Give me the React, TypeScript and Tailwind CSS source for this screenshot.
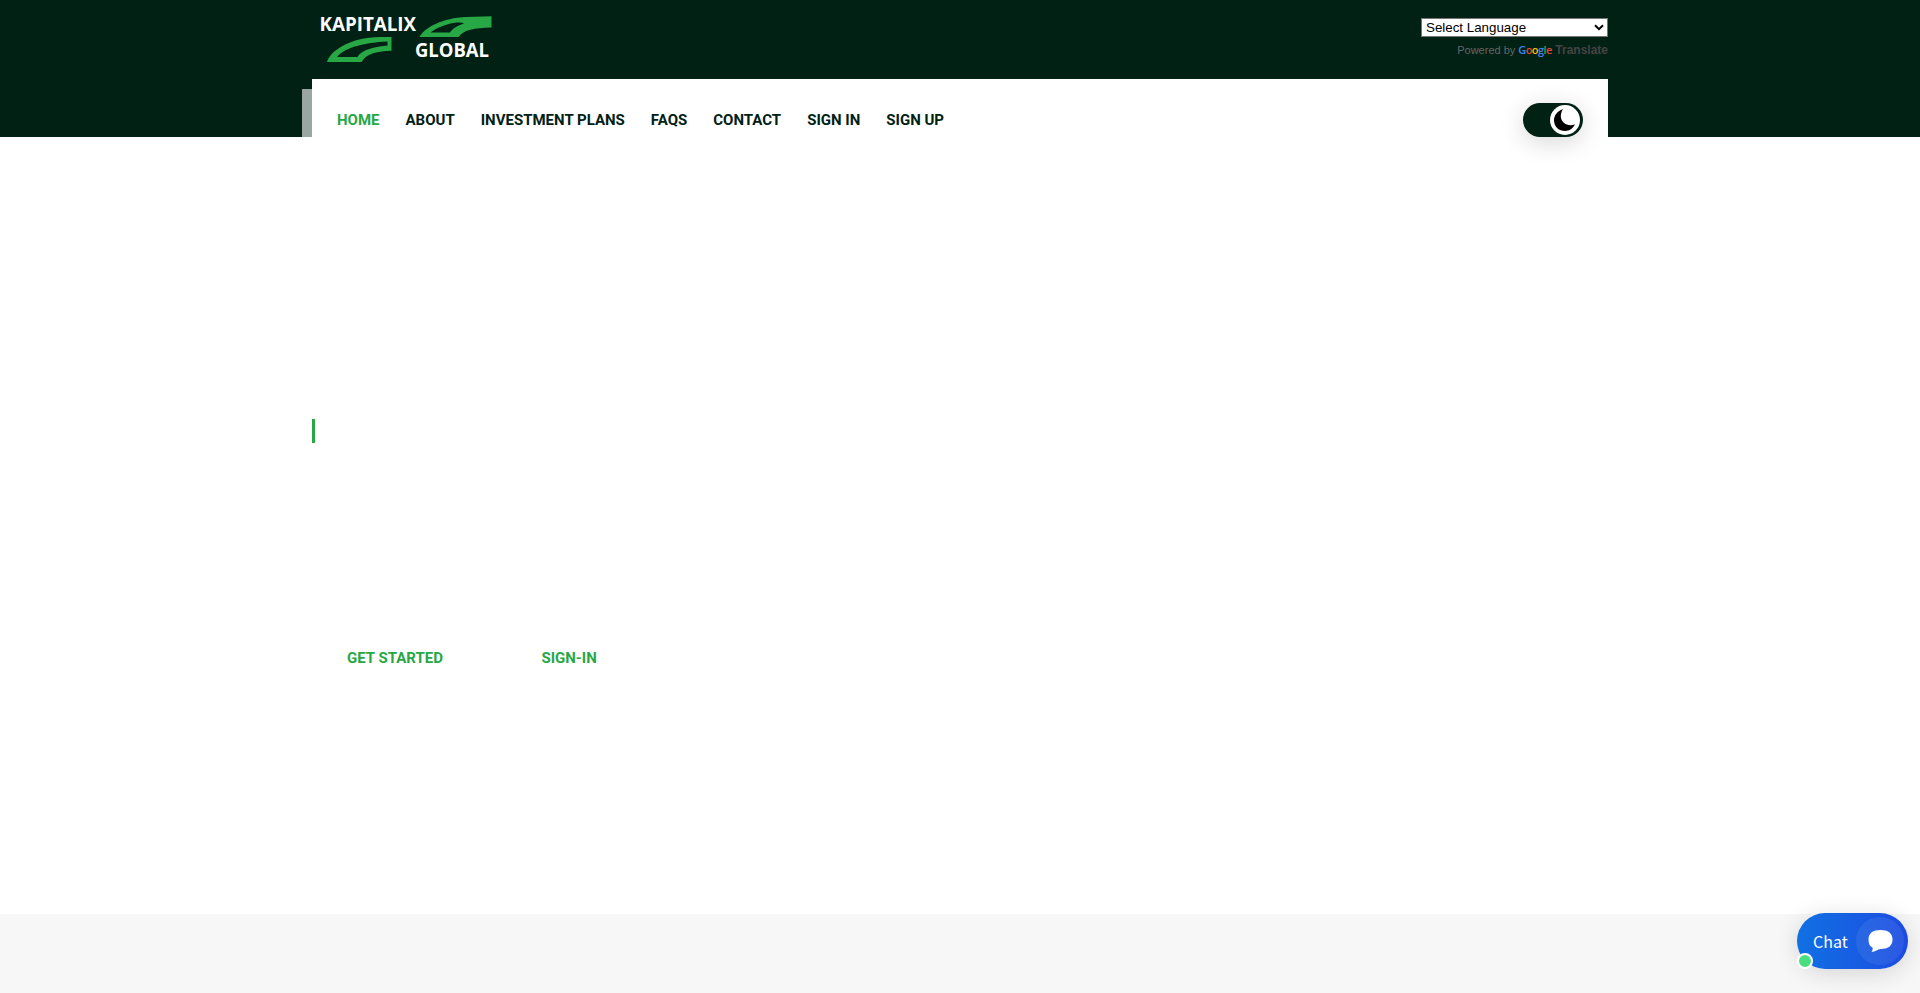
const links: { label: string; active?: boolean }[] = [
  { label: "HOME", active: true },
  { label: "ABOUT" },
  { label: "INVESTMENT PLANS" },
  { label: "FAQS" },
  { label: "CONTACT" },
  { label: "SIGN IN" },
  { label: "SIGN UP" },
];

function Logo() {
  return (
    <svg className="h-[60px] w-[180px]" viewBox="312 8 180 60" role="img" aria-label="Kapitalix Global">
      <g fill="#fff" className="font-['Open_Sans',sans-serif] text-[19.5px] font-bold">
        <text x="319.500" y="31" textLength="96.500" lengthAdjust="spacingAndGlyphs">KAPITALIX</text>
        <text x="415" y="57" textLength="74" lengthAdjust="spacingAndGlyphs">GLOBAL</text>
      </g>
      <g fill="#28a745" fillRule="evenodd">
        <path d="M419.500 37C425 27 443 18 466 17L491.500 16.300V27.500C474 28 464 29.500 458.500 37ZM430.500 32.500H450C453 28.500 456 26 464 23.500C462 22.500 458 22.300 455 22.700C446 24 436 28 430.500 32.500Z" />
        <path d="M327 62C330 52 345 42 364 38.500C373 37 382 36.800 391.500 37V50.700C377 51.500 367 53 361.500 62ZM337 57H357.500C361 51 369 47.500 387.500 45.500V41.500C366 42.500 345 47 337 57Z" />
      </g>
    </svg>
  );
}

function Google() {
  return (
    <span className="mr-1 ml-[3px] flex w-[33px] text-[11px] tracking-[-0.6px] font-['Open_Sans',sans-serif] font-semibold">
      <span className="text-[#4285f4]">G</span>
      <span className="text-[#ea4335]">o</span>
      <span className="text-[#fbbc05]">o</span>
      <span className="text-[#4285f4]">g</span>
      <span className="text-[#34a853]">l</span>
      <span className="text-[#ea4335]">e</span>
    </span>
  );
}

export default function App() {
  return (
    <div className="relative flex h-[993px] flex-col overflow-hidden bg-white font-[Roboto,sans-serif]">
      <header className="h-[137px] shrink-0 bg-[#012115]">
        <div className="mx-auto flex h-[79px] w-[1296px] items-start justify-between">
          <div className="pt-2">
            <Logo />
          </div>
          <div className="flex flex-col items-end pt-[18px] font-['Liberation_Sans',sans-serif]">
            <div className="flex h-[19px] w-[187px] items-center justify-between border border-[#767676] bg-white pr-[3px] pl-1 text-[13.333px] text-black">
              <span>Select Language</span>
              <svg className="h-[7px] w-[10px]" viewBox="0 0 10 7" fill="none" stroke="#000" strokeWidth="2">
                <path d="M1 1.200L5 5.200L9 1.200" />
              </svg>
            </div>
            <div className="mt-1 flex h-[18px] items-center whitespace-nowrap text-[11px] text-[#666]">
              Powered by
              <Google />
              <span className="text-[12px] font-bold text-[#444]">Translate</span>
            </div>
          </div>
        </div>
        <div className="relative mx-auto h-[82px] w-[1296px]">
          <div className="absolute top-[10px] -left-[10px] h-12 w-[10px] bg-[#99a6a1]" />
          <nav className="flex h-full items-center justify-between bg-white px-[25px]">
            <ul className="flex gap-[26px] text-[15px] font-bold">
              {links.map((l) => (
                <li key={l.label} className={l.active ? "text-[#28a745]" : "text-[#012115]"}>
                  {l.label}
                </li>
              ))}
            </ul>
            <button className="flex h-[34px] w-[60px] items-center justify-end rounded-full bg-[#012115] pr-[3px] shadow-[0_5px_25px_rgba(0,0,0,0.16)]">
              <span className="flex size-[30px] items-center justify-center rounded-full bg-white">
                <svg className="size-[22px]" viewBox="0 0 22 22">
                  <path d="M9 0C2.500 2.500 0 7 0 11.500C.3 18 5 22 11 22C15.500 22 19 19.500 21 15.300C17.500 17 12.500 16.500 9.500 13.500C6 10 6 5 9 0Z" />
                </svg>
              </span>
            </button>
          </nav>
        </div>
      </header>
      <main className="h-[777px] shrink-0">
        <div className="mx-auto w-[1296px] pt-[282px]">
          <div className="h-6 w-[3px] bg-[#28a745]" />
          <div className="mt-[204px] flex gap-[98.5px] pl-[35px] text-[15px] leading-[22px] font-bold text-[#28a745]">
            <a>GET STARTED</a>
            <a>SIGN-IN</a>
          </div>
        </div>
      </main>
      <section className="grow bg-[#f7f7f7]" />
      <button className="absolute right-3 bottom-6 flex h-14 w-[111px] items-center justify-between rounded-full bg-linear-to-r from-[#1170e4] to-[#1d4be0] pr-1 pl-4 shadow-[0_4px_24px_rgba(0,0,0,0.14)]">
        <span className="font-['Noto_Sans_CJK_SC',sans-serif] text-[16px] leading-none text-white">Chat</span>
        <span className="flex size-12 items-center justify-center rounded-full bg-white/7">
          <svg className="h-[22px] w-[25px]" viewBox="0 0 25 22" fill="#fff">
            <path d="M12.500 0C20 0 24.500 3 24.500 9.500S20 19 12.500 19C10 19.500 7 21.500 3.500 22C4.500 20.500 5 19 4.500 17.500C1.500 16 .5 13.500 .5 9.500C.5 3 5 0 12.500 0Z" />
          </svg>
        </span>
        <span className="absolute bottom-0 left-0 size-4 rounded-full border-2 border-white bg-[#4ade80]" />
      </button>
    </div>
  );
}
